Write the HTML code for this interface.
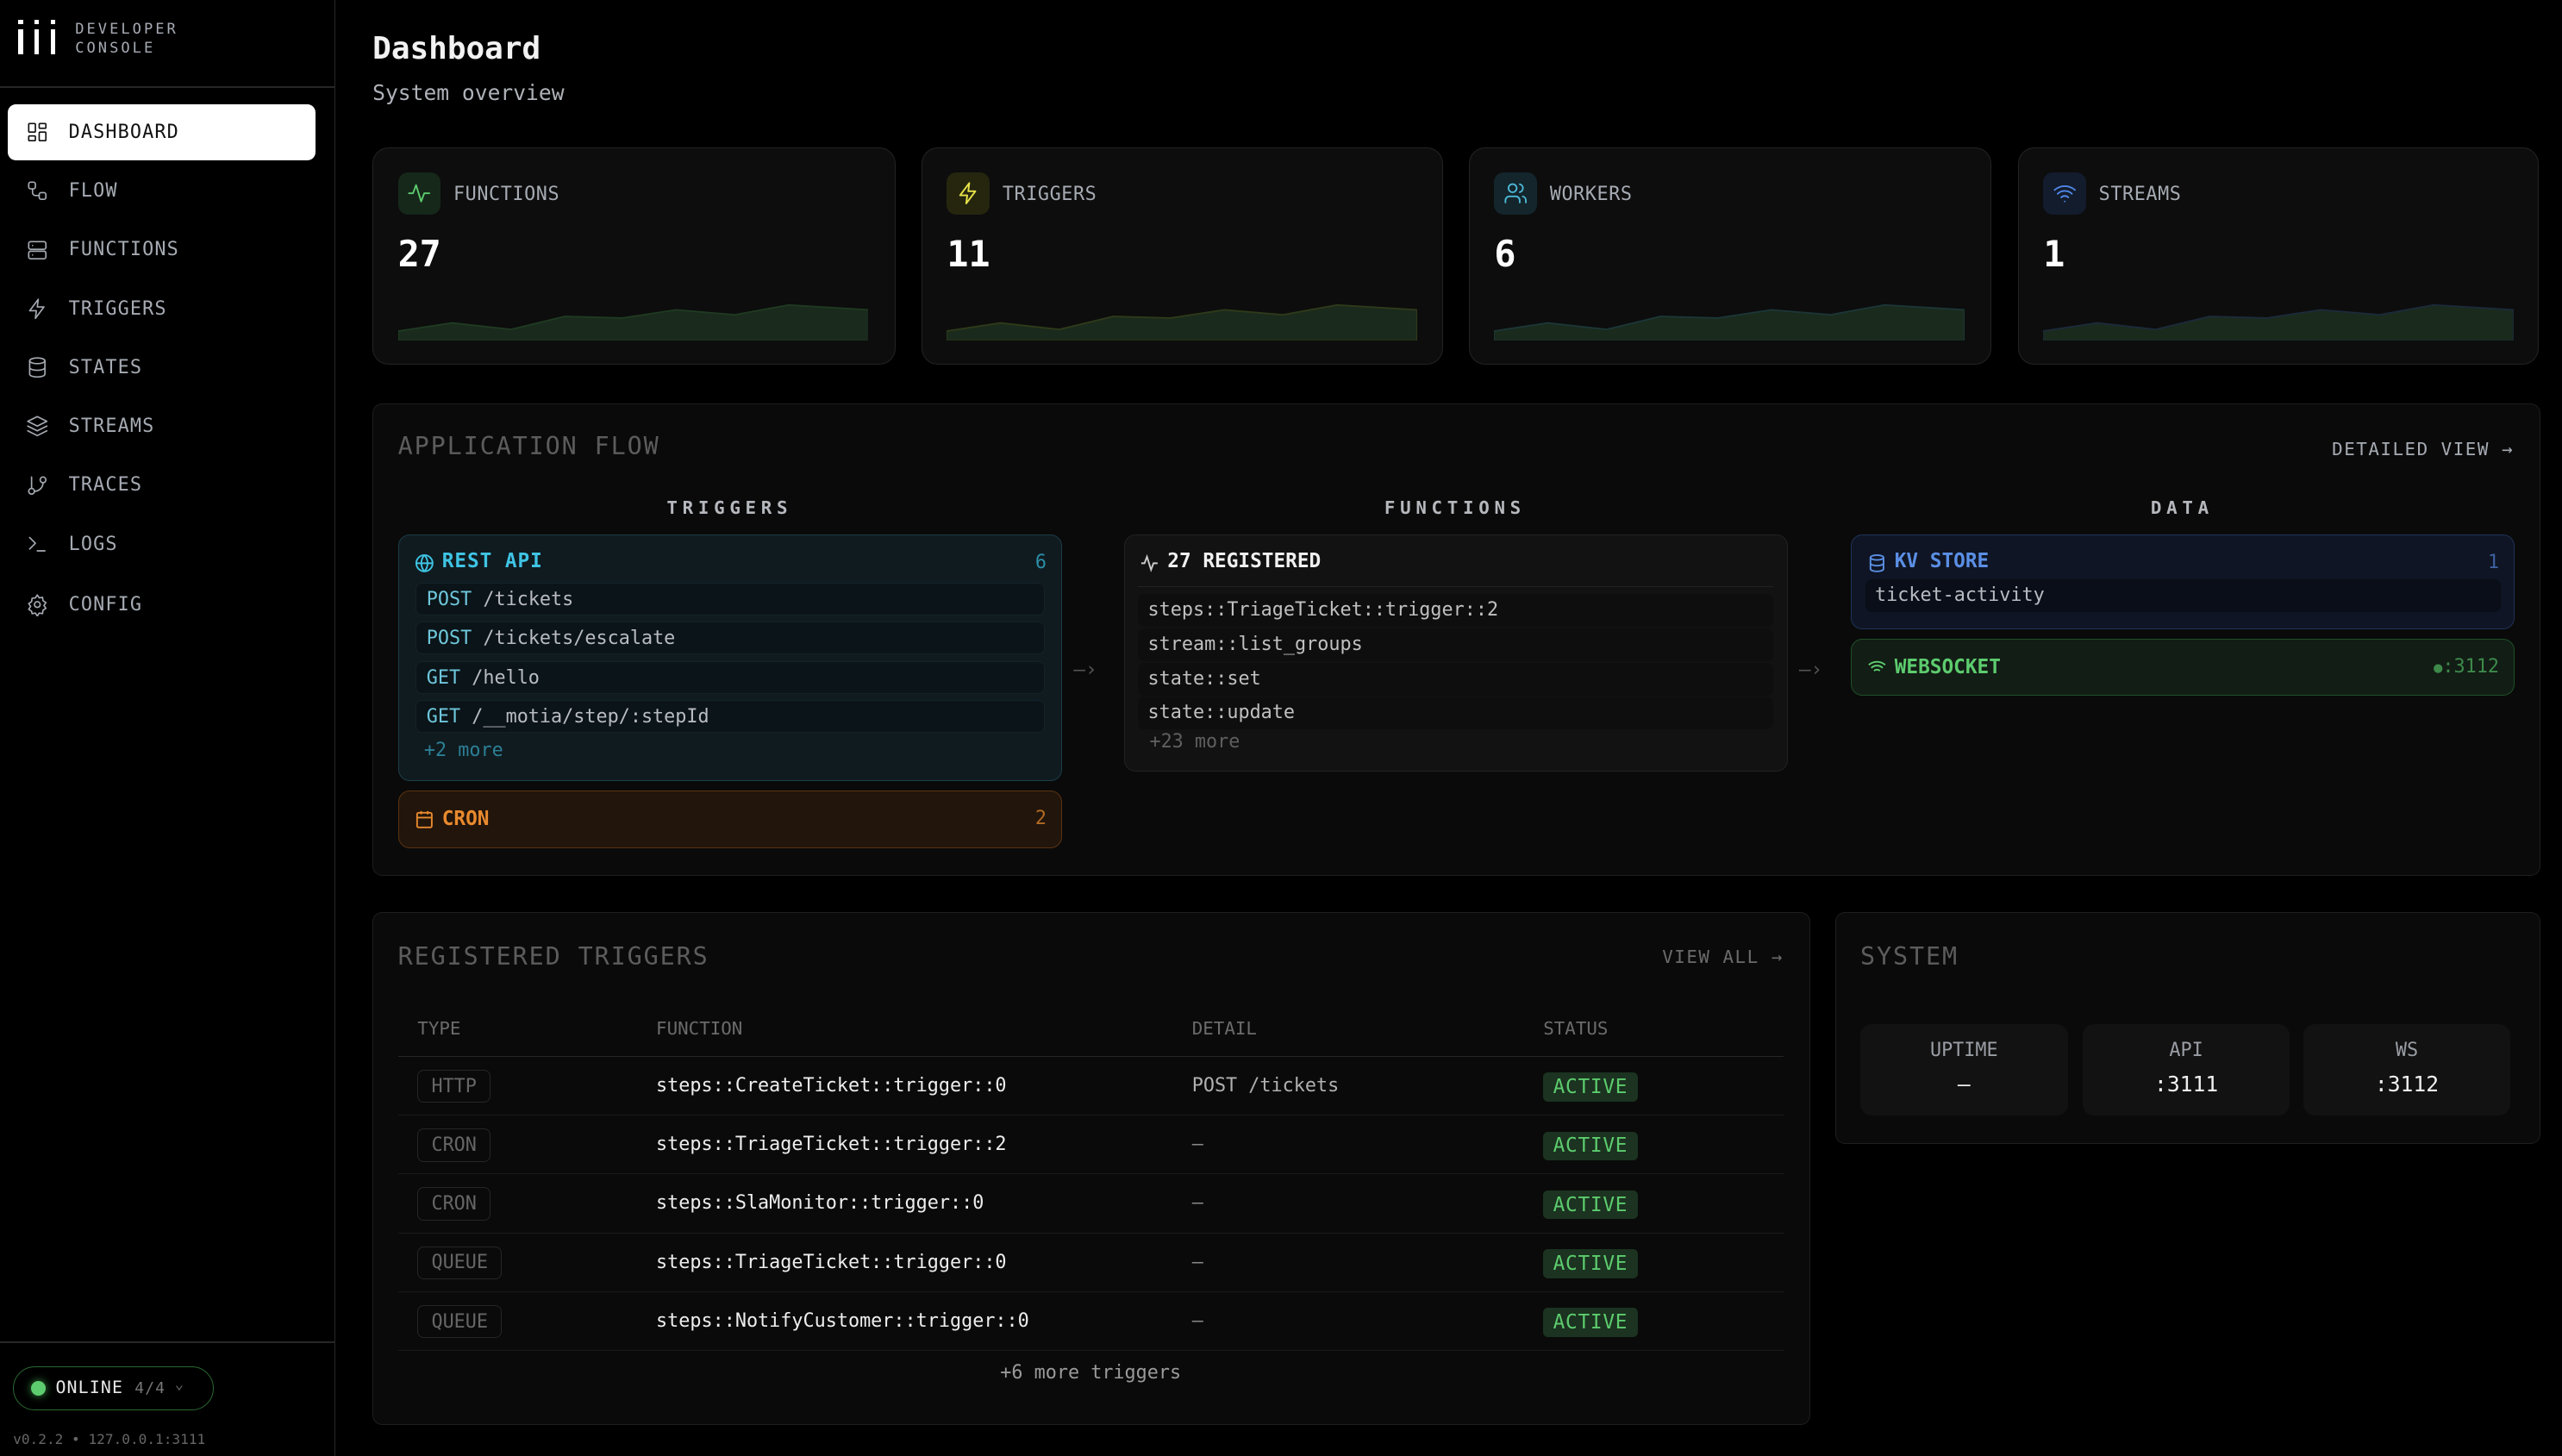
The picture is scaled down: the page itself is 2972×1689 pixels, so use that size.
<!DOCTYPE html>
<html><head><meta charset="utf-8"><style>
*{box-sizing:border-box;margin:0;padding:0}
html,body{background:#000;overflow:hidden}
body{width:1568px;height:891px;zoom:1.8954;position:relative;font-family:"DejaVu Sans Mono","Liberation Mono",monospace;color:#ddd}
.a{position:absolute;white-space:nowrap}
.side{position:absolute;left:0;top:0;width:205px;height:891px;border-right:1px solid #262626;background:#000}
.nav{position:absolute;left:5px;width:188px;height:34px;border-radius:5px;display:flex;align-items:center;padding-left:11px;font-size:11.5px;letter-spacing:.6px;color:#a6abb3}
.nav svg{width:14px;height:14px;margin-right:12px;fill:none;stroke:currentColor;stroke-width:1.5;stroke-linecap:round;stroke-linejoin:round}
.nav.act{background:#fff;color:#111}
.card{position:absolute;background:#0d0d0d;border:1px solid #232323;border-radius:10px}
.ib{position:absolute;left:15px;top:15px;width:26px;height:26px;border-radius:6px;display:flex;align-items:center;justify-content:center}
.ib svg{width:15px;height:15px;fill:none;stroke-width:1.6;stroke-linecap:round;stroke-linejoin:round}
.lbl{position:absolute;left:49px;top:22px;font-size:11.5px;color:#a6abb3;letter-spacing:.3px}
.num{position:absolute;left:15px;top:52px;font-size:22px;font-weight:bold;color:#fff}
.spark{position:absolute;left:15px;top:94px;width:288px;height:24px}
.panel{position:absolute;background:#0a0a0a;border:1px solid #1e1e1e;border-radius:6px}
.ptitle{position:absolute;left:15px;font-size:15px;color:#5c5c5c;letter-spacing:1px}
.colh{position:absolute;font-size:11px;font-weight:bold;letter-spacing:3px;color:#b5b8bd;transform:translateX(-50%)}
.row{position:absolute;left:10px;right:10px;height:20px;border-radius:4px;font-size:11.5px;padding-left:6px;line-height:20px}
table{border-collapse:collapse}
.th{font-size:11px;color:#6b6b6b}
.badge{display:inline-block;border:1px solid #262626;border-radius:4px;padding:3px 8px;font-size:11.5px;color:#666}
.act2{display:inline-block;background:#1b3320;color:#5dcc6e;border-radius:3px;padding:2px 6px;font-size:12px;letter-spacing:.4px}
.sb{position:absolute;top:68px;width:127px;height:56px;background:#121212;border-radius:7px;text-align:center}
.arr{position:absolute;font-size:12px;color:#555}
</style></head><body>
<div class="side">
  <div class="a" style="left:10px;top:12px;width:26px;height:22px">
    <div style="position:absolute;left:1px;top:0;width:3px;height:3px;background:#fff"></div><div style="position:absolute;left:1px;top:6px;width:3px;height:15px;background:#fff"></div>
    <div style="position:absolute;left:11px;top:0;width:3px;height:3px;background:#fff"></div><div style="position:absolute;left:11px;top:6px;width:3px;height:15px;background:#fff"></div>
    <div style="position:absolute;left:21px;top:0;width:3px;height:3px;background:#fff"></div><div style="position:absolute;left:21px;top:6px;width:3px;height:15px;background:#fff"></div>
  </div>
  <div class="a" style="left:46px;top:12px;font-size:9px;letter-spacing:1.6px;color:#a6abb3;line-height:12px">DEVELOPER<br>CONSOLE</div>
  <div class="a" style="left:0;top:53px;width:205px;height:1px;background:#262626"></div>
  <div class="nav act" style="top:64px"><svg viewBox="0 0 24 24"><rect x="3" y="3" width="7" height="9" rx="1"/><rect x="14" y="3" width="7" height="5" rx="1"/><rect x="14" y="12" width="7" height="9" rx="1"/><rect x="3" y="16" width="7" height="5" rx="1"/></svg>DASHBOARD</div>
  <div class="nav" style="top:100px"><svg viewBox="0 0 24 24"><rect x="3" y="3" width="7" height="7" rx="2"/><rect x="14" y="14" width="7" height="7" rx="2"/><path d="M7 10v4a3 3 0 0 0 3 3h4"/></svg>FLOW</div>
  <div class="nav" style="top:136px"><svg viewBox="0 0 24 24"><rect x="3" y="3" width="18" height="8" rx="2"/><rect x="3" y="13" width="18" height="8" rx="2"/><path d="M7 7h.01M7 17h.01"/></svg>FUNCTIONS</div>
  <div class="nav" style="top:172px"><svg viewBox="0 0 24 24"><path d="M13 2L4 14h7l-1 8 9-12h-7z"/></svg>TRIGGERS</div>
  <div class="nav" style="top:208px"><svg viewBox="0 0 24 24"><ellipse cx="12" cy="5" rx="8" ry="3"/><path d="M4 5v14c0 1.7 3.6 3 8 3s8-1.3 8-3V5M4 12c0 1.7 3.6 3 8 3s8-1.3 8-3"/></svg>STATES</div>
  <div class="nav" style="top:244px"><svg viewBox="0 0 24 24"><path d="M12 2L2 7l10 5 10-5z"/><path d="M2 12l10 5 10-5M2 17l10 5 10-5"/></svg>STREAMS</div>
  <div class="nav" style="top:280px"><svg viewBox="0 0 24 24"><path d="M6 3v12"/><circle cx="18" cy="6" r="3"/><circle cx="6" cy="18" r="3"/><path d="M18 9a9 9 0 0 1-9 9"/></svg>TRACES</div>
  <div class="nav" style="top:316px"><svg viewBox="0 0 24 24"><path d="M4 17l6-6-6-6M12 19h8"/></svg>LOGS</div>
  <div class="nav" style="top:353px"><svg viewBox="0 0 24 24"><circle cx="12" cy="12" r="3"/><path d="M12 2l2 3 3.5-.5.5 3.5 3 2-2 3 2 3-3 2-.5 3.5-3.5-.5-2 3-2-3-3.5.5L6 19l-3-2 2-3-2-3 3-2 .5-3.5L10 5z"/></svg>CONFIG</div>
  <div class="a" style="left:0;top:821px;width:205px;height:1px;background:#262626"></div>
  <div class="a" style="left:8px;top:836px;width:123px;height:27px;border:1px solid #2a6a31;border-radius:14px"></div>
  <div class="a" style="left:19px;top:845px;width:9px;height:9px;border-radius:50%;background:#5dcc6e;box-shadow:0 0 5px #3c9a4a"></div>
  <div class="a" style="left:34px;top:843px;font-size:10.5px;color:#e8e8e8;letter-spacing:.6px">ONLINE <span style="color:#777;font-size:9.5px">4/4</span></div>
  <div class="a" style="left:107px;top:842px;font-size:9px;color:#666">⌄</div>
  <div class="a" style="left:8px;top:876px;font-size:8.5px;color:#666">v0.2.2 • 127.0.0.1:3111</div>
</div>

<div class="a" style="left:228px;top:19px;font-size:19px;font-weight:bold;color:#f2f2f2">Dashboard</div>
<div class="a" style="left:228px;top:49px;font-size:13px;color:#aeb2b8">System overview</div>

<!-- stat cards -->
<div class="card" style="left:228px;top:90px;width:320px;height:133px">
  <div class="ib" style="background:#16281a"><svg viewBox="0 0 24 24" stroke="#5dcc6e"><path d="M2 12h4l3-8 5 16 3-8h5"/></svg></div>
  <div class="lbl">FUNCTIONS</div><div class="num">27</div>
  <svg class="spark" viewBox="0 0 288 24" preserveAspectRatio="none"><path d="M0 18L33 13 69 17 102 9 137 10 170 5 206 8 239 2 288 5V24H0Z" fill="#1a2a1c" stroke="#1f3a22"/></svg>
</div>
<div class="card" style="left:564px;top:90px;width:319px;height:133px">
  <div class="ib" style="background:#26260f"><svg viewBox="0 0 24 24" stroke="#e8e34a"><path d="M13 2L4 14h7l-1 8 9-12h-7z"/></svg></div>
  <div class="lbl">TRIGGERS</div><div class="num">11</div>
  <svg class="spark" viewBox="0 0 288 24" preserveAspectRatio="none"><path d="M0 18L33 13 69 17 102 9 137 10 170 5 206 8 239 2 288 5V24H0Z" fill="#1a2a1c" stroke="#2e3a1a"/></svg>
</div>
<div class="card" style="left:899px;top:90px;width:320px;height:133px">
  <div class="ib" style="background:#14252c"><svg viewBox="0 0 24 24" stroke="#4cb8d6"><circle cx="9" cy="7" r="4"/><path d="M2 21v-2a4 4 0 0 1 4-4h6a4 4 0 0 1 4 4v2M16 3.1a4 4 0 0 1 0 7.8M22 21v-2a4 4 0 0 0-3-3.9"/></svg></div>
  <div class="lbl">WORKERS</div><div class="num">6</div>
  <svg class="spark" viewBox="0 0 288 24" preserveAspectRatio="none"><path d="M0 18L33 13 69 17 102 9 137 10 170 5 206 8 239 2 288 5V24H0Z" fill="#1a2a1c" stroke="#1c3636"/></svg>
</div>
<div class="card" style="left:1235px;top:90px;width:319px;height:133px">
  <div class="ib" style="background:#131c2c"><svg viewBox="0 0 24 24" stroke="#4f86e8"><path d="M2 8.8a15 15 0 0 1 20 0M5 12.5a10 10 0 0 1 14 0M8.5 16a5 5 0 0 1 7 0M12 20h.01"/></svg></div>
  <div class="lbl">STREAMS</div><div class="num">1</div>
  <svg class="spark" viewBox="0 0 288 24" preserveAspectRatio="none"><path d="M0 18L33 13 69 17 102 9 137 10 170 5 206 8 239 2 288 5V24H0Z" fill="#1a2a1c" stroke="#1c2a3a"/></svg>
</div>

<!-- application flow -->
<div class="panel" style="left:228px;top:247px;width:1327px;height:289px">
  <div class="ptitle" style="top:17px">APPLICATION FLOW</div>
  <div class="a" style="right:16px;top:21px;font-size:11px;color:#a6abb3;letter-spacing:.8px">DETAILED VIEW →</div>
  <div class="colh" style="left:218px;top:57px">TRIGGERS</div>
  <div class="colh" style="left:662px;top:57px">FUNCTIONS</div>
  <div class="colh" style="left:1107px;top:57px">DATA</div>
</div>
<!-- rest api -->
<div class="a" style="left:244px;top:327px;width:406px;height:151px;background:#101b20;border:1px solid #1c3d47;border-radius:7px">
  <svg class="a" style="left:9px;top:11px;width:12px;height:12px" viewBox="0 0 24 24" fill="none" stroke="#3fc4e4" stroke-width="2"><circle cx="12" cy="12" r="10"/><path d="M2 12h20M12 2a15 15 0 0 1 0 20M12 2a15 15 0 0 0 0 20"/></svg>
  <div class="a" style="left:26px;top:9px;font-size:12px;font-weight:bold;color:#3fc4e4;letter-spacing:.5px">REST API</div>
  <div class="a" style="right:9px;top:10px;font-size:11.5px;color:#2c8ea6">6</div>
  <div class="row" style="top:29px;background:#0b1418;border:1px solid #13232a;color:#b8bcc2"><span style="color:#6ec7dc">POST</span> /tickets</div>
  <div class="row" style="top:53px;background:#0b1418;border:1px solid #13232a;color:#b8bcc2"><span style="color:#6ec7dc">POST</span> /tickets/escalate</div>
  <div class="row" style="top:77px;background:#0b1418;border:1px solid #13232a;color:#b8bcc2"><span style="color:#6ec7dc">GET</span> /hello</div>
  <div class="row" style="top:101px;background:#0b1418;border:1px solid #13232a;color:#b8bcc2"><span style="color:#6ec7dc">GET</span> /__motia/step/:stepId</div>
  <div class="a" style="left:15px;top:125px;font-size:11.5px;color:#2c7f94">+2 more</div>
</div>
<div class="a" style="left:244px;top:484px;width:406px;height:35px;background:#22150b;border:1px solid #5a3312;border-radius:7px">
  <svg class="a" style="left:9px;top:11px;width:12px;height:12px" viewBox="0 0 24 24" fill="none" stroke="#e88a2e" stroke-width="2"><rect x="3" y="4" width="18" height="18" rx="2"/><path d="M16 2v4M8 2v4M3 10h18"/></svg>
  <div class="a" style="left:26px;top:10px;font-size:12px;font-weight:bold;color:#e88a2e">CRON</div>
  <div class="a" style="right:9px;top:10px;font-size:11.5px;color:#b26a24">2</div>
</div>
<div class="arr" style="left:657px;top:403px">—›</div>
<!-- functions -->
<div class="a" style="left:688px;top:327px;width:406px;height:145px;background:#121212;border:1px solid #222;border-radius:7px">
  <svg class="a" style="left:9px;top:11px;width:12px;height:12px" viewBox="0 0 24 24" fill="none" stroke="#ccc" stroke-width="2"><path d="M2 12h4l3-8 5 16 3-8h5"/></svg>
  <div class="a" style="left:26px;top:9px;font-size:12px;font-weight:bold;color:#f0f0f0">27 REGISTERED</div>
  <div class="a" style="left:8px;right:8px;top:31px;height:1px;background:#222"></div>
  <div class="row" style="top:36px;left:8px;right:8px;background:#0e0e0e;color:#c0c0c0">steps::TriageTicket::trigger::2</div>
  <div class="row" style="top:57px;left:8px;right:8px;background:#0e0e0e;color:#c0c0c0">stream::list_groups</div>
  <div class="row" style="top:78px;left:8px;right:8px;background:#0e0e0e;color:#c0c0c0">state::set</div>
  <div class="row" style="top:99px;left:8px;right:8px;background:#0e0e0e;color:#c0c0c0">state::update</div>
  <div class="a" style="left:15px;top:120px;font-size:11.5px;color:#5f5f5f">+23 more</div>
</div>
<div class="arr" style="left:1101px;top:403px">—›</div>
<!-- data -->
<div class="a" style="left:1133px;top:327px;width:406px;height:58px;background:#0f1524;border:1px solid #1e3358;border-radius:7px">
  <svg class="a" style="left:9px;top:11px;width:12px;height:12px" viewBox="0 0 24 24" fill="none" stroke="#5b8fe6" stroke-width="2"><ellipse cx="12" cy="5" rx="8" ry="3"/><path d="M4 5v14c0 1.7 3.6 3 8 3s8-1.3 8-3V5M4 12c0 1.7 3.6 3 8 3s8-1.3 8-3"/></svg>
  <div class="a" style="left:26px;top:9px;font-size:12px;font-weight:bold;color:#5b8fe6">KV STORE</div>
  <div class="a" style="right:9px;top:10px;font-size:11.5px;color:#3e61a0">1</div>
  <div class="row" style="top:27px;left:8px;right:8px;background:#0a0e18;color:#b8bcc2">ticket-activity</div>
</div>
<div class="a" style="left:1133px;top:391px;width:406px;height:35px;background:#121d15;border:1px solid #1f5028;border-radius:7px">
  <svg class="a" style="left:9px;top:11px;width:12px;height:12px" viewBox="0 0 24 24" fill="none" stroke="#5dcc6e" stroke-width="2"><path d="M2 8.8a15 15 0 0 1 20 0M5 12.5a10 10 0 0 1 14 0M8.5 16a5 5 0 0 1 7 0M12 20h.01"/></svg>
  <div class="a" style="left:26px;top:10px;font-size:12px;font-weight:bold;color:#5dcc6e">WEBSOCKET</div>
  <div class="a" style="right:9px;top:10px;font-size:11.5px;color:#3d8a4a"><span style="font-size:9px">●</span>:3112</div>
</div>

<!-- registered triggers -->
<div class="panel" style="left:228px;top:558px;width:880px;height:314px">
  <div class="ptitle" style="top:18px">REGISTERED TRIGGERS</div>
  <div class="a" style="right:16px;top:21px;font-size:11px;color:#6b6b6b;letter-spacing:.8px">VIEW ALL →</div>
  <table class="a" style="left:15px;top:54px;width:848px">
    <tr style="height:34px;border-bottom:1px solid #262626"><td class="th" style="width:158px;padding-left:12px">TYPE</td><td class="th" style="width:328px">FUNCTION</td><td class="th" style="width:215px">DETAIL</td><td class="th">STATUS</td></tr>
    <tr style="height:36px;border-bottom:1px solid #1a1a1a"><td style="padding-left:12px"><span class="badge">HTTP</span></td><td style="font-size:11.5px;color:#eee">steps::CreateTicket::trigger::0</td><td style="font-size:11.5px;color:#b0b0b0">POST /tickets</td><td><span class="act2">ACTIVE</span></td></tr>
    <tr style="height:36px;border-bottom:1px solid #1a1a1a"><td style="padding-left:12px"><span class="badge">CRON</span></td><td style="font-size:11.5px;color:#eee">steps::TriageTicket::trigger::2</td><td style="font-size:11.5px;color:#888">–</td><td><span class="act2">ACTIVE</span></td></tr>
    <tr style="height:36px;border-bottom:1px solid #1a1a1a"><td style="padding-left:12px"><span class="badge">CRON</span></td><td style="font-size:11.5px;color:#eee">steps::SlaMonitor::trigger::0</td><td style="font-size:11.5px;color:#888">–</td><td><span class="act2">ACTIVE</span></td></tr>
    <tr style="height:36px;border-bottom:1px solid #1a1a1a"><td style="padding-left:12px"><span class="badge">QUEUE</span></td><td style="font-size:11.5px;color:#eee">steps::TriageTicket::trigger::0</td><td style="font-size:11.5px;color:#888">–</td><td><span class="act2">ACTIVE</span></td></tr>
    <tr style="height:36px;border-bottom:1px solid #1a1a1a"><td style="padding-left:12px"><span class="badge">QUEUE</span></td><td style="font-size:11.5px;color:#eee">steps::NotifyCustomer::trigger::0</td><td style="font-size:11.5px;color:#888">–</td><td><span class="act2">ACTIVE</span></td></tr>
  </table>
  <div class="a" style="left:0;width:878px;top:275px;text-align:center;font-size:11.5px;color:#9a9a9a">+6 more triggers</div>
</div>

<!-- system -->
<div class="panel" style="left:1123px;top:558px;width:432px;height:142px">
  <div class="ptitle" style="top:18px">SYSTEM</div>
  <div class="sb" style="left:15px"><div style="margin-top:10px;font-size:11.5px;color:#9a9ea5">UPTIME</div><div style="margin-top:6px;font-size:13px;color:#f0f0f0">–</div></div>
  <div class="sb" style="left:151px"><div style="margin-top:10px;font-size:11.5px;color:#9a9ea5">API</div><div style="margin-top:6px;font-size:13px;color:#f0f0f0">:3111</div></div>
  <div class="sb" style="left:286px"><div style="margin-top:10px;font-size:11.5px;color:#9a9ea5">WS</div><div style="margin-top:6px;font-size:13px;color:#f0f0f0">:3112</div></div>
</div>
</body></html>
